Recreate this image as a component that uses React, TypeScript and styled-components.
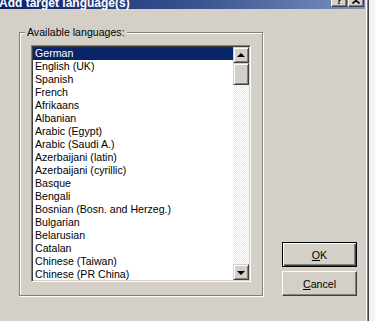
import React from "react";
import styled, { createGlobalStyle } from "styled-components";

const GlobalStyle = createGlobalStyle`
  html, body {
    margin: 0;
    padding: 0;
    background: #f2f2f2;
    overflow: hidden;
  }
  body {
    font-family: "Liberation Sans", Arial, sans-serif;
    font-size: 10.6px;
    color: #000;
  }
`;

const Window = styled.div`
  display: flex;
  flex-direction: column;
  width: 369px;
  height: 340px;
  margin-top: -9px;
  box-sizing: border-box;
  background: #d4d0c8;
  border-right: 1px solid #404040;
  box-shadow: inset -1px 0 0 #808080, inset -2px 0 0 #ffffff;
`;

const TitleBar = styled.div`
  display: flex;
  align-items: flex-start;
  height: 18px;
  margin-right: 3px;
  background: linear-gradient(to right, #0a246a 0%, #3a5590 55%, #7c91c0 100%);
`;

const TitleText = styled.span`
  margin-left: -1px;
  padding-top: 5px;
  font-family: "Liberation Sans", Arial, sans-serif;
  font-weight: bold;
  font-size: 12px;
  line-height: 14px;
  color: #ffffff;
  white-space: nowrap;
`;

const TitleButtons = styled.div`
  display: flex;
  gap: 1px;
  margin-left: auto;
  margin-top: 2px;
  margin-right: 1px;
`;

const TitleButton = styled.div`
  display: flex;
  align-items: center;
  justify-content: center;
  width: 16px;
  height: 14px;
  box-sizing: border-box;
  background: #d4d0c8;
  border: 1px solid;
  border-color: #ffffff #404040 #404040 #ffffff;
  box-shadow: inset -1px -1px 0 #808080;
  font-family: "Liberation Sans", Arial, sans-serif;
  font-weight: bold;
  font-size: 11px;
  line-height: 12px;
  color: #000;
`;

const Body = styled.div`
  display: flex;
  align-items: flex-end;
  padding: 23px 0 0 19px;
`;

const GroupBox = styled.section`
  display: flex;
  flex-direction: column;
  align-items: flex-start;
  width: 244px;
  height: 264px;
  box-sizing: border-box;
  border: 1px solid #808080;
  box-shadow: inset 1px 1px 0 #ffffff, 1px 1px 0 #ffffff;
`;

const GroupLabel = styled.div`
  margin: -7px 0 0 5px;
  padding: 0 2px;
  background: #d4d0c8;
  line-height: 13px;
  height: 13px;
  white-space: nowrap;
`;

const ListBox = styled.div`
  display: flex;
  width: 220px;
  height: 237px;
  margin: 6px 0 0 11px;
  box-sizing: border-box;
  background: #ffffff;
  border: 1px solid;
  border-color: #808080 #ffffff #ffffff #808080;
  box-shadow: inset 1px 1px 0 #404040, inset -1px -1px 0 #d4d0c8;
  padding: 1px;
  overflow: hidden;
`;

const Items = styled.div`
  flex: 1;
  display: flex;
  flex-direction: column;
  overflow: hidden;
`;

const Item = styled.div<{ $selected?: boolean }>`
  flex: none;
  height: 13px;
  line-height: 13px;
  padding-left: 2px;
  white-space: nowrap;
  background: ${(p) => (p.$selected ? "#0a246a" : "transparent")};
  color: ${(p) => (p.$selected ? "#ffffff" : "#000000")};
`;

const ScrollBar = styled.div`
  display: flex;
  flex-direction: column;
  width: 16px;
  flex: none;
`;

const ScrollButton = styled.div`
  display: flex;
  align-items: center;
  justify-content: center;
  width: 16px;
  height: 16px;
  flex: none;
  box-sizing: border-box;
  background: #d4d0c8;
  border: 1px solid;
  border-color: #d4d0c8 #404040 #404040 #d4d0c8;
  box-shadow: inset 1px 1px 0 #ffffff, inset -1px -1px 0 #808080;
`;

const Thumb = styled.div`
  width: 16px;
  height: 22px;
  flex: none;
  box-sizing: border-box;
  background: #d4d0c8;
  border: 1px solid;
  border-color: #d4d0c8 #404040 #404040 #d4d0c8;
  box-shadow: inset 1px 1px 0 #ffffff, inset -1px -1px 0 #808080;
`;

const Track = styled.div`
  flex: 1;
  background-color: #ffffff;
  background-image: repeating-conic-gradient(#ebe9e5 0 25%, #ffffff 0 50%);
  background-size: 2px 2px;
`;

const Arrow = styled.div<{ $down?: boolean }>`
  width: 0;
  height: 0;
  border-left: 4px solid transparent;
  border-right: 4px solid transparent;
  ${(p) =>
    p.$down
      ? "border-top: 4px solid #000; margin-top: 1px;"
      : "border-bottom: 4px solid #000; margin-top: -1px;"}
`;

const ButtonColumn = styled.div`
  display: flex;
  flex-direction: column;
  gap: 4px;
  margin-left: 19px;
`;

const PushButton = styled.button<{ $default?: boolean }>`
  width: 75px;
  height: 25px;
  box-sizing: border-box;
  padding: 0;
  font-family: "Liberation Sans", Arial, sans-serif;
  font-size: 10.6px;
  color: #000;
  background: #d4d0c8;
  border: 1px solid;
  border-color: ${(p) =>
    p.$default ? "#000000" : "#ffffff #404040 #404040 #ffffff"};
  box-shadow: ${(p) =>
    p.$default
      ? "inset 1px 1px 0 #ffffff, inset -1px -1px 0 #404040, inset -2px -2px 0 #808080"
      : "inset -1px -1px 0 #808080"};
  cursor: default;

  u {
    text-decoration: underline;
    text-underline-offset: 1px;
  }
`;

const languages = [
  "German",
  "English (UK)",
  "Spanish",
  "French",
  "Afrikaans",
  "Albanian",
  "Arabic (Egypt)",
  "Arabic (Saudi A.)",
  "Azerbaijani (latin)",
  "Azerbaijani (cyrillic)",
  "Basque",
  "Bengali",
  "Bosnian (Bosn. and Herzeg.)",
  "Bulgarian",
  "Belarusian",
  "Catalan",
  "Chinese (Taiwan)",
  "Chinese (PR China)",
];

export default function App() {
  return (
    <>
      <GlobalStyle />
      <Window>
        <TitleBar>
          <TitleText>Add target language(s)</TitleText>
          <TitleButtons>
            <TitleButton>?</TitleButton>
            <TitleButton>
              <svg width="8" height="7" viewBox="0 0 8 7">
                <path d="M0.5 0.5 L7.5 6.5 M7.5 0.5 L0.5 6.5" stroke="#000" strokeWidth="1.6" fill="none" />
              </svg>
            </TitleButton>
          </TitleButtons>
        </TitleBar>
        <Body>
          <GroupBox>
            <GroupLabel>Available languages:</GroupLabel>
            <ListBox>
              <Items>
                {languages.map((l, i) => (
                  <Item key={l} $selected={i === 0}>
                    {l}
                  </Item>
                ))}
              </Items>
              <ScrollBar>
                <ScrollButton>
                  <Arrow />
                </ScrollButton>
                <Thumb />
                <Track />
                <ScrollButton>
                  <Arrow $down />
                </ScrollButton>
              </ScrollBar>
            </ListBox>
          </GroupBox>
          <ButtonColumn>
            <PushButton $default>
              <u>O</u>K
            </PushButton>
            <PushButton>
              <u>C</u>ancel
            </PushButton>
          </ButtonColumn>
        </Body>
      </Window>
    </>
  );
}
